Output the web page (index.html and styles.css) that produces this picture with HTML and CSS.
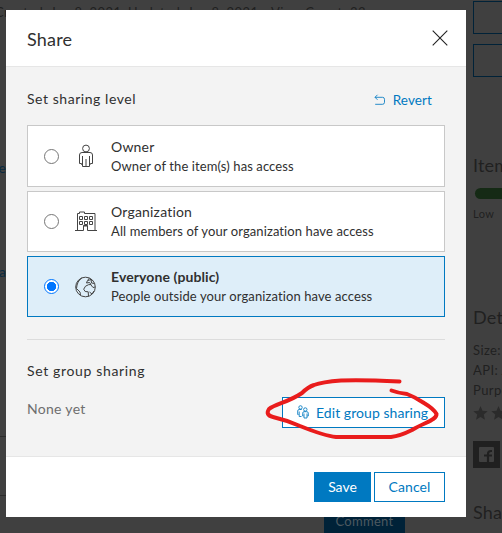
FILE: index.html
```
<!DOCTYPE html>
<html lang="en">
<head>
<meta charset="utf-8">
<title>Share</title>
<link rel="stylesheet" href="styles.css">
</head>
<body>
<div class="page">
  <main class="content">
    <div class="meta"><span class="m1">Created: Jan 8, 2021</span><span class="m2">Updated: Jan 8, 2021</span><span class="m3">View Count: 33</span></div>
    <a class="frag frag-one">ne</a>
    <a class="frag frag-two">a</a>
    <div class="panel"></div>
    <div class="comment">Comment</div>
  </main>
  <aside class="side">
    <div class="side-btn"></div>
    <div class="side-btn"></div>
    <h2 class="h-item">Item</h2>
    <div class="bar"></div>
    <div class="low">Low</div>
    <h2 class="h-det">Details</h2>
    <div class="fact">Size: 1</div>
    <div class="fact">API: Java</div>
    <div class="fact">Purpose</div>
    <div class="stars"><svg width="36" height="16" viewBox="0 0 36 16"><path d="M7.500 1l2 4.800 5.200.4-4 3.400 1.300 5.100-4.500-2.800L3 14.700l1.300-5.100-4-3.400 5.200-.4z"/><path d="M25.500 1l2 4.800 5.200.4-4 3.400 1.300 5.100-4.500-2.800-4.500 2.800 1.300-5.100-4-3.400 5.200-.4z"/></svg></div>
    <div class="fb"><svg width="27" height="27" viewBox="0 0 27 27"><rect x="6" y="6" width="15" height="15" rx="1" fill="#404040"/><path d="M15 21v-8q0-3 3-3h1M11 14.500h8" fill="none" stroke="#202020" stroke-width="2.200"/></svg></div>
    <h2 class="h-share">Share</h2>
  </aside>
</div>

<div class="modal" role="dialog">
  <header class="head">
    <h1>Share</h1>
    <svg class="close" width="16" height="16" viewBox="0 0 16 16"><path d="M.7.7l14.600 14.600M15.300.7L.7 15.300"/></svg>
  </header>
  <section class="body">
    <div class="row">
      <h3 class="t-level">Set sharing level</h3>
      <a class="revert"><svg width="12" height="12" viewBox="0 0 12 12"><path d="M3.500.8L1 3.300l2.500 2.500M1 3.300h7.500q2 0 2 2v3q0 2-2 2H1.200"/></svg><span>Revert</span></a>
    </div>
    <div class="options">
      <label class="option">
        <i class="radio"></i>
        <svg class="ico" width="24" height="24" viewBox="0 0 24 24"><circle cx="12" cy="4.500" r="3.400"/><path d="M8.500 20.500H7.500V19.500H5.500v-8.500q0-2.500 2.500-2.500h8q2.500 0 2.500 2.500v8.500h-2v1M8.500 12v10.500h7V12M12 15v7.500"/></svg>
        <span class="copy"><b>Owner</b><span>Owner of the item(s) has access</span></span>
      </label>
      <label class="option">
        <i class="radio"></i>
        <svg class="ico" width="24" height="24" viewBox="0 0 24 24"><path d="M1 20.500h8.500V16h4v4.500H23M3.500 20.500v-17h2v-1.500h5v1.500h10.500v17M9.500 16v-.5h4v.5"/><path d="M5.500 6.500h3v3h-3zM10.500 6.500h3v3h-3zM15.500 6.500h3v3h-3zM5.500 11.500h3v3h-3zM10.500 11.500h3v3h-3zM15.500 11.500h3v3h-3z"/></svg>
        <span class="copy"><b>Organization</b><span>All members of your organization have access</span></span>
      </label>
      <label class="option selected">
        <i class="radio"></i>
        <svg class="ico" width="24" height="24" viewBox="0 0 24 24"><circle cx="11.500" cy="12" r="9.800"/><path d="M8 2.900Q3 6 2.500 13.500L6 17l.5 3.300M15.500 3l-2 2.500-1 2.500 3-.5 1.500 2-2.500.2-3 1.500-1.800 3 1.500 2.300 3 .3.300 4.500M16 4l2.500 1.500M14 5.500l3-1 .5 3.500 3 .5M17 10l2 2.500 2-.5M15.500 17l2.500 2 2-3"/></svg>
        <span class="copy"><b>Everyone (public)</b><span>People outside your organization have access</span></span>
      </label>
    </div>
    <hr>
    <h3 class="t-group">Set group sharing</h3>
    <div class="group">
      <span class="none">None yet</span>
      <button class="edit"><svg width="12" height="14" viewBox="0 0 12 14"><circle cx="3.500" cy="2.400" r="1.700"/><circle cx="8.300" cy="4.500" r="1.700"/><path d="M1.500 9.500H.7V6Q.7 4.500 2.200 4.500h2.500M2.200 6.500V11.500h2.300M6.500 11h-.8V8.200Q5.700 6.700 7 6.700h2.800q1.500 0 1.500 1.500v2.800h-1M7 8.500v4.500h3V8.500"/></svg><span>Edit group sharing</span></button>
    </div>
  </section>
  <footer class="foot">
    <button class="save"><span>Save</span></button>
    <button class="cancel"><span>Cancel</span></button>
  </footer>
  <svg class="mark" width="180" height="70" viewBox="260 373 180 70"><path d="M399.500 381.500Q360 379.500 341 380.500Q322 382 314 385Q308 387 302 393C289 402 275 404 269 409Q265 415 273 417Q286 420 300 426Q325 436 336 437H391Q400 436 412 430C425 422 437 420 436.500 414Q434 409 424 403Q415 397 407 394Q398 393 391.500 390.500"/></svg>
</div>
</body>
</html>
```
FILE: styles.css
```
* { box-sizing: border-box; }
body { margin: 0; width: 502px; height: 533px; overflow: hidden; background: #404040; font-family: Lato, "Open Sans", sans-serif; color: #242424; }
h1, h2, h3 { margin: 0; font-weight: 400; white-space: nowrap; }
svg { display: block; flex: none; }
button { font-family: inherit; padding: 0; margin: 0; }

.page { display: grid; grid-template-columns: 473px 29px; height: 533px; overflow: hidden; color: #202020; }
.content { display: flex; flex-direction: column; overflow: hidden; height: 533px; }
.meta { display: flex; height: 22px; padding-top: 3px; font-size: 13px; line-height: 18px; letter-spacing: .45px; white-space: nowrap; flex: none; }
.m1 { flex: none; width: 133px; margin-left: -5px; }
.m2 { flex: none; width: 143px; }
.frag { flex: none; width: 6px; height: 20px; font-size: 14px; line-height: 20px; color: #0a2a40; display: flex; justify-content: flex-end; }
.frag-one { margin-top: 136px; }
.frag-two { margin-top: 84px; }
.panel { flex: none; width: 7px; height: 60px; margin-top: 154px; border-top: 1px solid #2c2c2c; border-bottom: 1px solid #2c2c2c; }
.comment { flex: none; width: 81px; height: 36px; margin: 9px 0 0 324px; padding-top: 4px; background: #002238; color: #4d5960; font-size: 13px; line-height: 24px; letter-spacing: .3px; text-align: center; }
.side { overflow: hidden; white-space: nowrap; height: 533px; }
.side-btn { height: 33px; width: 60px; margin-top: 1px; border: 1px solid #002238; }
.side-btn + .side-btn { margin-top: 10px; }
.side h2 { font-size: 18px; line-height: 24px; letter-spacing: .2px; }
.h-item { margin-top: 76px; }
.bar { height: 11px; width: 60px; margin: 11px 0 0 2px; border-radius: 6px; background: #152a15; }
.low { font-size: 11px; line-height: 16px; margin-top: 7px; letter-spacing: .4px; }
.side .h-det { margin-top: 83px; }
.fact { font-size: 13px; line-height: 20px; letter-spacing: .4px; }
.h-det + .fact { margin-top: 11px; }
.stars { height: 16px; margin-top: 5px; }
.stars svg { fill: #2b2b2b; }
.fb { width: 27px; height: 27px; background: #202020; margin-top: 20px; }
.side .h-share { margin-top: 32px; }

.modal { position: absolute; left: 6px; top: 10px; width: 460px; height: 507px; background: #fff; display: flex; flex-direction: column; color: #303030; }
.head { height: 57px; flex: none; display: flex; align-items: center; justify-content: space-between; padding: 0 18px 0 21px; border-bottom: 1px solid #e6e6e6; }
.head h1 { font-size: 18px; line-height: 24px; letter-spacing: .2px; padding-top: 1px; }
.close { fill: none; stroke: #222; stroke-width: 1.1; }
.body { height: 390px; flex: none; background: #f3f3f3; border-bottom: 1px solid #e6e6e6; padding: 22px 21px 0; }
.row { display: flex; justify-content: space-between; height: 36px; padding-right: 13px; }
h3 { font-size: 14px; line-height: 20px; letter-spacing: .55px; }
.revert { display: flex; align-items: center; gap: 7px; height: 22px; font-size: 13.5px; letter-spacing: .1px; color: #0079c1; }
.revert svg, .edit svg { fill: none; stroke: currentColor; stroke-width: .85; }
.options { display: grid; grid-template-rows: 62px 61px 61px; gap: 4px; }
.option { display: flex; align-items: center; background: #fff; border: 1px solid #c8c8c8; padding-left: 16px; }
.selected { background: #deeef9; border-color: #0079c1; }
.radio { flex: none; width: 15px; height: 15px; border: 1px solid #767676; border-radius: 50%; background: #fff; }
.selected .radio { border-color: #0075ff; background: radial-gradient(circle, #0075ff 4.4px, #fff 5px); }
.ico { margin: 0 13px 0 15px; fill: none; stroke: #444; stroke-width: 1; }
.copy { display: flex; flex-direction: column; white-space: nowrap; padding-bottom: 1px; }
.copy b { font-size: 14px; line-height: 20px; font-weight: 400; letter-spacing: .2px; }
.copy span { font-size: 13px; line-height: 18px; letter-spacing: .1px; }
.copy .selected b, .selected b { font-weight: 700; letter-spacing: .1px; }
hr { margin: 22px 0 0; border: 0; border-top: 1px solid #dcdcdc; }
.t-group { margin-top: 21px; letter-spacing: .65px; }
.group { display: flex; justify-content: space-between; margin-top: 16px; height: 31px; }
.none { color: #6e6e6e; font-size: 14px; line-height: 24px; letter-spacing: .3px; }
.edit { width: 163px; height: 31px; background: #fff; border: 1px solid #0079c1; color: #0079c1; font-size: 14px; display: flex; align-items: center; gap: 7px; padding: 0 0 1px 14px; white-space: nowrap; letter-spacing: .05px; }
.foot { display: flex; gap: 3px; justify-content: flex-end; padding: 15px 21px 0 0; }
.foot button { height: 30px; font-size: 14px; padding-bottom: 1px; border: 1px solid #0079c1; color: #0079c1; background: #fff; }
.foot .save { width: 57px; background: #0079c1; color: #fff; }
.foot .cancel { width: 71px; letter-spacing: .1px; }
.mark { position: absolute; left: 254px; top: 363px; fill: none; stroke: #e91c1c; stroke-width: 4; stroke-linecap: round; stroke-linejoin: round; }
```
